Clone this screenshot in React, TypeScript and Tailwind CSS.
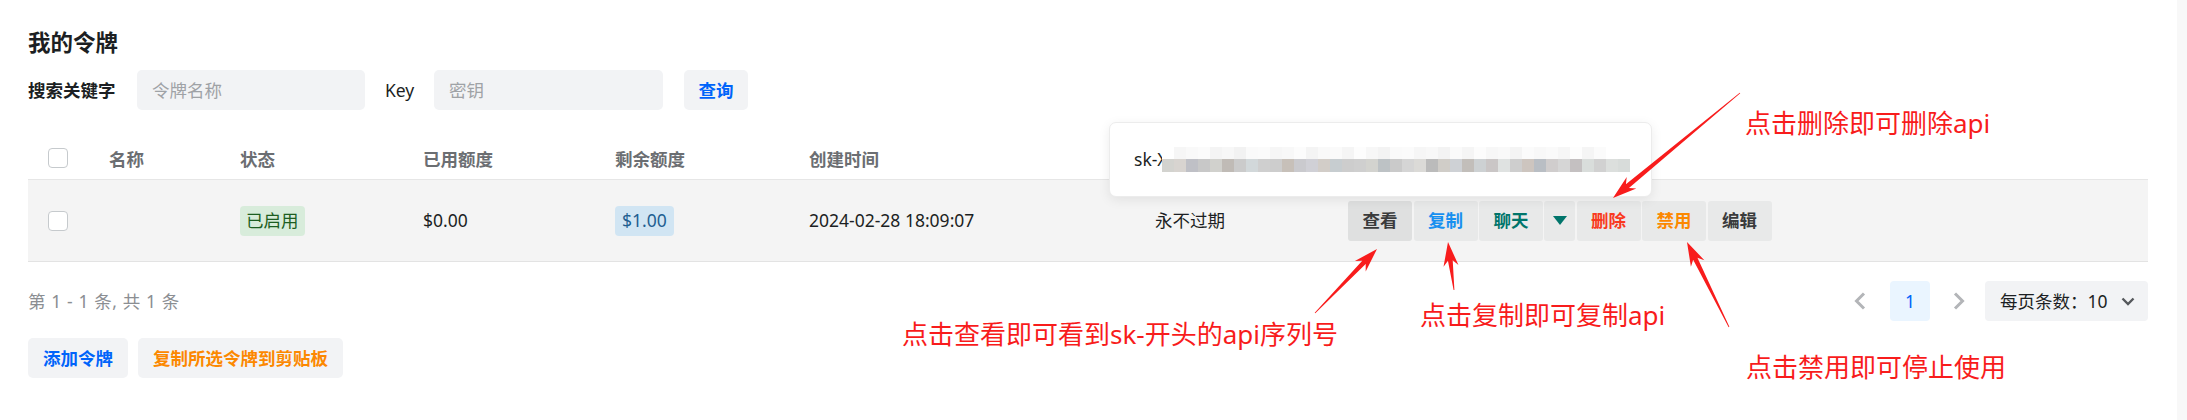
import React from 'react';

type Pt = [number, number];

// red annotation arrow: thin tail, widening shaft, swept head
const arrowPoints = (tail: Pt, head: Pt) => {
  const [tx, ty] = tail;
  const [hx, hy] = head;
  const len = Math.hypot(hx - tx, hy - ty);
  const ux = (hx - tx) / len;
  const uy = (hy - ty) / len;
  const nx = -uy;
  const ny = ux;
  const headLen = 24;
  const headW = 7.5;
  const shaftW = 2.4;
  const bx = hx - ux * headLen * 0.78;
  const by = hy - uy * headLen * 0.78;
  const wx = hx - ux * headLen;
  const wy = hy - uy * headLen;
  const pts: Pt[] = [
    [tx + nx * 0.4, ty + ny * 0.4],
    [bx + nx * shaftW, by + ny * shaftW],
    [wx + nx * headW, wy + ny * headW],
    [hx, hy],
    [wx - nx * headW, wy - ny * headW],
    [bx - nx * shaftW, by - ny * shaftW],
    [tx - nx * 0.4, ty - ny * 0.4],
  ];
  return pts.map((p) => p.join(',')).join(' ');
};

const arrows: { tail: Pt; head: Pt }[] = [
  { tail: [1740, 93], head: [1613, 198] },
  { tail: [1315, 313], head: [1377, 249] },
  { tail: [1454, 290], head: [1448, 242] },
  { tail: [1729, 327], head: [1687, 242] },
];

const lightRow = [
  'bg-[#ffffff]', 'bg-[#f6f6f6]', 'bg-[#f9f9f9]', 'bg-[#fbfbfb]', 'bg-[#f4f4f4]', 'bg-[#f7f7f7]', 'bg-[#f2f2f2]', 'bg-[#fafafa]',
  'bg-[#fbfbfb]', 'bg-[#f6f6f6]', 'bg-[#f8f8f8]', 'bg-[#fcfcfc]', 'bg-[#f4f4f4]', 'bg-[#f9f9f9]', 'bg-[#fafafa]', 'bg-[#f5f5f5]',
  'bg-[#fdfdfd]', 'bg-[#f7f7f7]', 'bg-[#f3f3f3]', 'bg-[#fafafa]', 'bg-[#fbfbfb]', 'bg-[#f6f6f6]', 'bg-[#f8f8f8]', 'bg-[#f3f3f3]',
  'bg-[#fafafa]', 'bg-[#f5f5f5]', 'bg-[#fcfcfc]', 'bg-[#f7f7f7]', 'bg-[#f9f9f9]', 'bg-[#f4f4f4]', 'bg-[#fbfbfb]', 'bg-[#f8f8f8]',
  'bg-[#fafafa]', 'bg-[#f6f6f6]', 'bg-[#fdfdfd]', 'bg-[#f5f5f5]', 'bg-[#fbfbfb]', 'bg-[#ffffff]', 'bg-[#ffffff]',
];

const darkRow = [
  'bg-[#d3d3cf]', 'bg-[#d8d4d0]', 'bg-[#bfc0c6]', 'bg-[#c8c8c8]', 'bg-[#d1d1cd]', 'bg-[#c0bbb6]', 'bg-[#cbcbcb]', 'bg-[#d2d8da]',
  'bg-[#cfcfcf]', 'bg-[#cdcdcd]', 'bg-[#c7c0b9]', 'bg-[#cacace]', 'bg-[#d0d0d6]', 'bg-[#d2cdc8]', 'bg-[#c7cdd0]', 'bg-[#cdcdcd]',
  'bg-[#cfcfcf]', 'bg-[#d3d3cf]', 'bg-[#bdc2c5]', 'bg-[#cacaca]', 'bg-[#d5d5d5]', 'bg-[#dbdad7]', 'bg-[#bbbbbb]', 'bg-[#d0cdc8]',
  'bg-[#ced1d5]', 'bg-[#c2beba]', 'bg-[#cdd1d3]', 'bg-[#cac6c6]', 'bg-[#dfe2e1]', 'bg-[#cecece]', 'bg-[#cdc5bf]', 'bg-[#b9bec4]',
  'bg-[#d0cdcd]', 'bg-[#d6d6d6]', 'bg-[#c4c0c1]', 'bg-[#d9dddb]', 'bg-[#d1d1d1]', 'bg-[#dcdfdd]', 'bg-[#d8dcda]',
];

const Checkbox = () => (
  <div className="h-[20px] w-[20px] rounded-[4px] border-[1.5px] border-[#c6cacd] bg-white" />
);

const cols = 'grid grid-cols-[81px_131px_183px_192px_194px_346px_193px_1fr] items-center';

const ActionBtn = ({ label, color, bg = 'bg-[#e8e9e9]' }: { label: string; color: string; bg?: string }) => (
  <button className={`flex h-[40px] w-[64px] items-center justify-center rounded-[3px] font-bold ${bg} ${color}`}>
    {label}
  </button>
);

export default function App() {
  return (
    <div className="relative flex h-[420px] w-[2187px] overflow-hidden bg-white font-['Noto_Sans','Noto_Sans_CJK_SC',sans-serif] text-[17.5px] text-[#1c1f23]">
      <div className="flex-1 pl-[28px] pr-[29px] pt-[28px]">
        <h1 className="text-[22.5px] font-bold leading-[30px]">我的令牌</h1>

        <div className="mt-[12px] flex h-[40px] items-center">
          <span className="w-[109px] font-bold">搜索关键字</span>
          <div className="flex h-[40px] w-[228px] items-center rounded-[5px] bg-[#f2f3f5] pl-[15px] text-[#9fa2a6]">令牌名称</div>
          <span className="ml-[20px] w-[49px]">Key</span>
          <div className="flex h-[40px] w-[229px] items-center rounded-[5px] bg-[#f2f3f5] pl-[15px] text-[#9fa2a6]">密钥</div>
          <button className="ml-[21px] h-[40px] w-[64px] rounded-[5px] bg-[#f2f3f5] font-bold text-[#0064fa]">查询</button>
        </div>

        <div className="mt-[30px]">
          <div className={`${cols} h-[40px] border-b border-[#e6e6e6] font-semibold text-[#6b6e72]`}>
            <div className="-mt-[4px] pl-[20px]"><Checkbox /></div>
            <div>名称</div>
            <div>状态</div>
            <div>已用额度</div>
            <div>剩余额度</div>
            <div>创建时间</div>
            <div />
            <div />
          </div>
          <div className={`${cols} h-[82px] border-b border-[#e3e3e3] bg-[#f4f4f4]`}>
            <div className="pl-[20px]"><Checkbox /></div>
            <div />
            <div>
              <span className="inline-flex h-[30px] items-center rounded-[4px] bg-[#d8ecdb] px-[6px] text-[#1d5e22]">已启用</span>
            </div>
            <div>$0.00</div>
            <div>
              <span className="inline-flex h-[30px] items-center rounded-[4px] bg-[#d1e5f3] px-[7px] text-[#1f5f91]">$1.00</span>
            </div>
            <div>2024-02-28 18:09:07</div>
            <div>永不过期</div>
            <div className="flex items-center gap-[1.5px]">
              <ActionBtn label="查看" color="text-[#3a3b3c]" bg="bg-[#dfe0e0]" />
              <ActionBtn label="复制" color="text-[#1890f0]" />
              <div className="flex">
                <ActionBtn label="聊天" color="text-[#00756b]" />
                <button className="ml-[1px] flex h-[40px] w-[31px] items-center justify-center rounded-[3px] bg-[#e8e9e9]">
                  <svg width="14" height="9" viewBox="0 0 14 9"><polygon points="0,0 14,0 7,9" fill="#00756b" /></svg>
                </button>
              </div>
              <ActionBtn label="删除" color="text-[#f93920]" />
              <ActionBtn label="禁用" color="text-[#fc8800]" />
              <ActionBtn label="编辑" color="text-[#3a3b3c]" />
            </div>
          </div>
        </div>

        <div className="mt-[19px] flex h-[40px] items-center justify-between">
          <span className="tracking-[0.6px] text-[#8b8e92]">第 1 - 1 条, 共 1 条</span>
          <div className="flex items-center">
            <div className="flex h-[40px] w-[40px] items-center justify-center">
              <svg width="12" height="18" viewBox="0 0 12 18"><polyline points="10,1.5 2.5,9 10,16.5" fill="none" stroke="#b3b5b8" strokeWidth="3" /></svg>
            </div>
            <div className="ml-[10px] flex h-[40px] w-[40px] items-center justify-center rounded-[4px] bg-[#eaf5ff] text-[#0064fa]">1</div>
            <div className="ml-[9px] flex h-[40px] w-[40px] items-center justify-center">
              <svg width="12" height="18" viewBox="0 0 12 18"><polyline points="2,1.5 9.5,9 2,16.5" fill="none" stroke="#b3b5b8" strokeWidth="3" /></svg>
            </div>
            <div className="ml-[6px] flex h-[40px] w-[163px] items-center justify-between rounded-[4px] bg-[#f2f3f5] pl-[15px] pr-[13px]">
              <span>每页条数：10</span>
              <svg width="14" height="9" viewBox="0 0 14 9"><polyline points="1.5,1.5 7,7 12.5,1.5" fill="none" stroke="#55585c" strokeWidth="2.4" /></svg>
            </div>
          </div>
        </div>

        <div className="mt-[17px] flex gap-[10px]">
          <button className="h-[40px] w-[100px] rounded-[5px] bg-[#f2f3f5] font-bold text-[#0064fa]">添加令牌</button>
          <button className="h-[40px] w-[205px] rounded-[5px] bg-[#f2f3f5] font-bold text-[#fc8800]">复制所选令牌到剪贴板</button>
        </div>
      </div>
      <div className="w-[10px] bg-[#f8f8f8]" />

      {/* key popover */}
      <div className="absolute left-[1109px] top-[122px] flex h-[75px] w-[543px] items-center rounded-[7px] border border-[#ececec] bg-white pl-[24px] shadow-[0_3px_12px_rgba(0,0,0,0.08)]">
        <span>sk-X</span>
        <div className="-ml-[6px] flex flex-col">
          <div className="flex">
            {lightRow.map((c, i) => (
              <div key={i} className={`h-[12px] w-[12px] ${c}`} />
            ))}
          </div>
          <div className="flex">
            {darkRow.map((c, i) => (
              <div key={i} className={`h-[13px] w-[12px] ${c}`} />
            ))}
          </div>
        </div>
      </div>

      {/* annotations */}
      <svg className="pointer-events-none absolute left-0 top-0" width="2187" height="420">
        {arrows.map((a, i) => (
          <polygon key={i} points={arrowPoints(a.tail, a.head)} fill="#f81c1c" />
        ))}
      </svg>
      <div className="absolute left-[1745px] top-[108px] text-[26px] leading-[30px] text-[#f81c1c]">点击删除即可删除api</div>
      <div className="absolute left-[1420px] top-[300px] text-[26px] leading-[30px] text-[#f81c1c]">点击复制即可复制api</div>
      <div className="absolute left-[902px] top-[319px] text-[26px] leading-[30px] text-[#f81c1c]">点击查看即可看到sk-开头的api序列号</div>
      <div className="absolute left-[1746px] top-[352px] text-[26px] leading-[30px] text-[#f81c1c]">点击禁用即可停止使用</div>
    </div>
  );
}
